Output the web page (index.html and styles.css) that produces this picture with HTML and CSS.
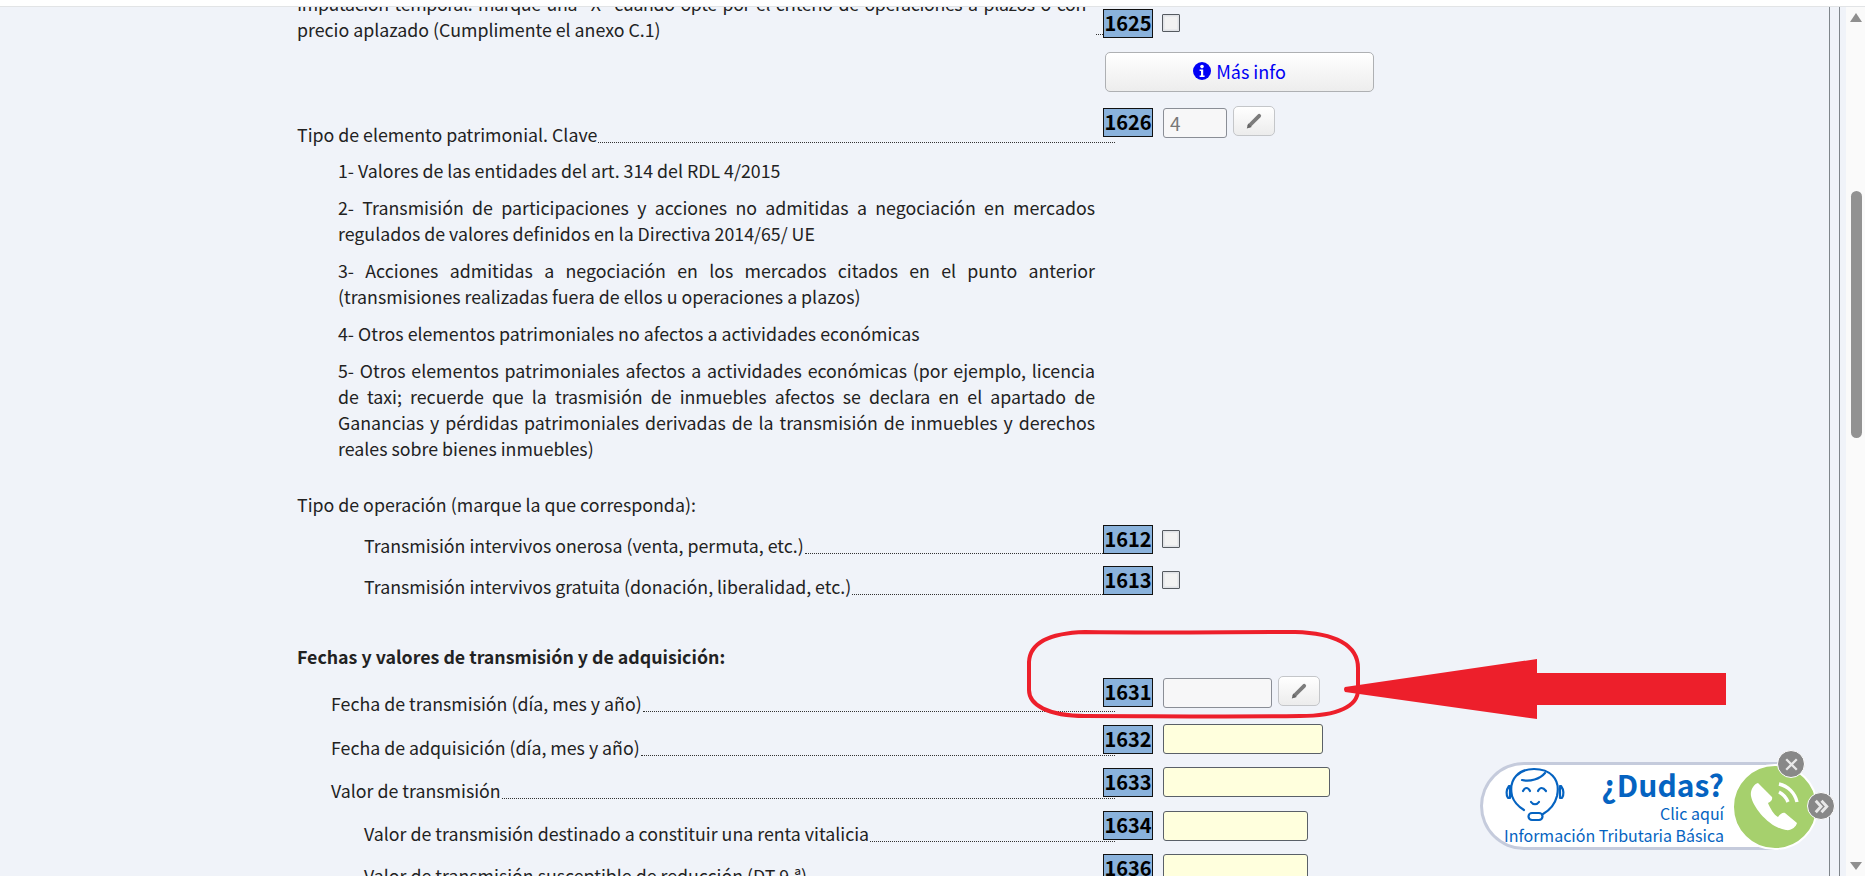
FILE: index.html
```html
<!DOCTYPE html>
<html lang="es">
<head>
<meta charset="utf-8">
<title>Ganancias patrimoniales</title>
<link rel="stylesheet" href="styles.css">
</head>
<body>
<div class="page">
  <div class="topbar"></div>
  <div class="content">
    <main class="canvas">
      <div class="form">
        <div class="row first">
          <div class="label multi">
            <span class="text justified"><span class="line-one">Imputación temporal: marque una "X" cuando opte por el criterio de operaciones a plazos o con</span><span class="line-two">precio aplazado (Cumplimente el anexo C.1)</span></span>
            <span class="lead short"></span>
          </div>
          <div class="fields boxed"><span class="code">1625</span><input class="check" type="checkbox"></div>
        </div>
        <div class="more"><button class="info" type="button"><svg class="info-icon" viewBox="0 0 18 18"><circle cx="9" cy="9" r="9" fill="#0000f5"/><circle cx="9" cy="4.6" r="1.8" fill="#fff"/><path d="M6.6 7.4h3.6v6h1.4v1.6H6.6v-1.6H8V9H6.6z" fill="#fff"/></svg>Más info</button></div>
        <div class="row r1626">
          <div class="label"><span class="text">Tipo de elemento patrimonial. Clave</span><span class="lead"></span></div>
          <div class="fields"><span class="code low">1626</span><input class="field grey w64 low" type="text" value="4" disabled><button class="pencil" type="button"><svg viewBox="0 0 16 16"><path d="M4 12 12.6 3.4" stroke="#7c7c7c" stroke-width="3.4" stroke-linecap="round" fill="none"/><path d="M1.6 14.6l1.2-4.4 3.2 3.2z" fill="#666"/></svg></button></div>
        </div>
        <p class="note one">1- Valores de las entidades del art. 314 del RDL 4/2015</p>
        <p class="note">2- Transmisión de participaciones y acciones no admitidas a negociación en mercados regulados de valores definidos en la Directiva 2014/65/ UE</p>
        <p class="note">3- Acciones admitidas a negociación en los mercados citados en el punto anterior (transmisiones realizadas fuera de ellos u operaciones a plazos)</p>
        <p class="note">4- Otros elementos patrimoniales no afectos a actividades económicas</p>
        <p class="note">5- Otros elementos patrimoniales afectos a actividades económicas (por ejemplo, licencia de taxi; recuerde que la trasmisión de inmuebles afectos se declara en el apartado de Ganancias y pérdidas patrimoniales derivadas de la transmisión de inmuebles y derechos reales sobre bienes inmuebles)</p>
        <p class="plain">Tipo de operación (marque la que corresponda):</p>
        <div class="row r1612">
          <div class="label lv2"><span class="text">Transmisión intervivos onerosa (venta, permuta, etc.)</span><span class="lead"></span></div>
          <div class="fields boxed"><span class="code">1612</span><input class="check" type="checkbox"></div>
        </div>
        <div class="row r1613">
          <div class="label lv2"><span class="text">Transmisión intervivos gratuita (donación, liberalidad, etc.)</span><span class="lead"></span></div>
          <div class="fields boxed"><span class="code">1613</span><input class="check" type="checkbox"></div>
        </div>
        <h2 class="heading">Fechas y valores de transmisión y de adquisición:</h2>
        <div class="row r1631">
          <div class="label lv1"><span class="text">Fecha de transmisión (día, mes y año)</span><span class="lead"></span></div>
          <div class="fields"><span class="code low">1631</span><input class="field grey w109 low" type="text" disabled><button class="pencil" type="button"><svg viewBox="0 0 16 16"><path d="M4 12 12.6 3.4" stroke="#7c7c7c" stroke-width="3.4" stroke-linecap="round" fill="none"/><path d="M1.6 14.6l1.2-4.4 3.2 3.2z" fill="#666"/></svg></button></div>
        </div>
        <div class="row r1632">
          <div class="label lv1"><span class="text">Fecha de adquisición (día, mes y año)</span><span class="lead"></span></div>
          <div class="fields"><span class="code tight">1632</span><input class="field yellow w160" type="text"></div>
        </div>
        <div class="row r1633">
          <div class="label lv1"><span class="text">Valor de transmisión</span><span class="lead"></span></div>
          <div class="fields"><span class="code tight">1633</span><input class="field yellow w167" type="text"></div>
        </div>
        <div class="row r1634">
          <div class="label lv2"><span class="text">Valor de transmisión destinado a constituir una renta vitalicia</span><span class="lead"></span></div>
          <div class="fields"><span class="code">1634</span><input class="field yellow w145" type="text"></div>
        </div>
        <div class="row r1636">
          <div class="label lv2"><span class="text">Valor de transmisión susceptible de reducción (DT 9.ª)</span><span class="lead"></span></div>
          <div class="fields"><span class="code">1636</span><input class="field yellow w145" type="text"></div>
        </div>
      </div>
    </main>
    <div class="rail"></div>
    <div class="scrollbar">
      <span class="arrow up"></span>
      <span class="thumb"></span>
      <span class="arrow down"></span>
    </div>
  </div>

  <svg class="annotation" viewBox="0 0 1865 876" aria-hidden="true">
    <path d="M1085 632 C1150 633 1230 632 1295 632 C1335 633 1358 645 1358 668 L1358 690 C1358 706 1338 716 1300 716 C1230 717 1150 716 1085 716 C1048 716 1029 705 1029 690 L1029 662 C1030 642 1052 633 1085 632Z" fill="none" stroke="#ed1f2b" stroke-width="4"/>
    <path d="M1345 687 L1537 659 V673 H1726 V705 H1537 V719 L1345 692 Q1343 689 1345 687Z" fill="#ed1f2b"/>
  </svg>

  <aside class="widget">
    <svg class="agent" viewBox="0 0 90 70">
      <g fill="none" stroke="#0563c1" stroke-width="2.2" stroke-linecap="round" stroke-linejoin="round">
        <path d="M22 36 C18 18 30 9 44 9 C59 9 71 18 67 36 C65 44 60 50 53 54"/>
        <path d="M22 36 C24 42 29 47 34 50"/>
        <path d="M32 20 C40 22 50 19 55 13"/>
        <path d="M19 26 C16 30 16 35 18 38 L20 38 L20 26Z"/>
        <path d="M71 26 C74 30 74 35 72 38 L70 38 L70 26Z"/>
        <path d="M33 31 C35 27 38 27 40 31"/>
        <path d="M48 31 C50 27 53 27 56 31"/>
        <path d="M41 42 C43 45 47 45 49 42"/>
        <rect x="38.5" y="53" width="14" height="7" rx="3.5"/>
      </g>
    </svg>
    <div class="help">
      <strong class="doubt">¿Dudas?</strong>
      <span class="click">Clic aquí</span>
      <span class="click">Información Tributaria Básica</span>
    </div>
    <svg class="phone" viewBox="0 0 90 90">
      <circle cx="45" cy="45" r="42" fill="#a6d06d" stroke="#fff" stroke-width="2"/>
      <path d="M28 21 C24 22 20 28 21 34 C23 46 40 66 56 68 C61 69 66 65 67 61 L55 51 C53 50 50 52 48 55 C44 53 40 46 38 41 C40 40 43 38 42 35Z" fill="#fff"/>
      <path d="M49 22 C58 24 65 31 67 40" fill="none" stroke="#fff" stroke-width="3.4"/>
      <path d="M49 30 C53 32 56 35 58 40" fill="none" stroke="#fff" stroke-width="3.4"/>
    </svg>
    <button class="round close" type="button" aria-label="Cerrar"><svg viewBox="0 0 26 26"><path d="M7.5 7.5l11 11M18.5 7.5l-11 11" stroke="#e8e8e8" stroke-width="2.4"/></svg></button>
    <button class="round expand" type="button" aria-label="Ocultar"><svg viewBox="0 0 26 26"><path d="M7 7l5.5 6L7 19M13 7l5.5 6-5.5 6" fill="none" stroke="#e8e8e8" stroke-width="3"/></svg></button>
  </aside>
</div>
</body>
</html>
```
FILE: styles.css
```css
* { box-sizing: border-box; }
html, body { margin: 0; padding: 0; height: 100%; overflow: hidden; }
body {
  background: #f0f3f9;
  color: #222;
  font-family: "Noto Sans CJK SC", "Noto Sans", "Liberation Sans", sans-serif;
  font-size: 17.78px;
}
.page { position: relative; width: 1865px; height: 876px; display: flex; flex-direction: column; overflow: hidden; }
.topbar { flex: none; height: 7px; background: #fff; border-bottom: 1px solid #e2e4e6; }
.content { flex: 1; display: flex; min-height: 0; }
.canvas { width: 1829px; flex: none; overflow: hidden; }
.rail { flex: none; width: 11px; border-left: 1.5px solid #7f858b; border-right: 1.5px solid #7f858b; margin-right: 6px; }
.scrollbar { flex: none; width: 19px; background: #fafafa; display: flex; flex-direction: column; align-items: center; padding-left: 1px; padding-top: 6px; }
.thumb { width: 11px; height: 247px; border-radius: 6px; background: #929292; margin-top: 169px; }
.arrow { width: 0; height: 0; border-left: 6.5px solid transparent; border-right: 6.5px solid transparent; }
.arrow.up { border-bottom: 9px solid #8f8f8f; }
.arrow.down { border-top: 8px solid #8f8f8f; margin-top: auto; margin-bottom: 6px; }

.form { margin-left: 297px; width: 1100px; }
.row { display: grid; grid-template-columns: 806px 1fr; }
.label { display: flex; align-items: flex-end; align-self: end; line-height: 14px; white-space: nowrap; }
.label.lv1 { padding-left: 34px; }
.label.lv2 { padding-left: 67px; }
.label.multi { white-space: normal; line-height: 26px; align-self: start; }
.text { flex: none; margin-bottom: 2px; }
.text.justified { width: 789px; flex: none; }
.line-one { display: block; letter-spacing: -0.35px; white-space: nowrap; text-align: justify; text-align-last: justify; }
.line-two { display: block; }
.lead { flex: 1; border-bottom: 1px dotted #333; margin: 0 -12px 0 1px; height: 1px; }
.lead.short { margin: 0 0 9px 10px; }
.fields { display: flex; align-items: flex-start; }

.row.first { margin-top: -17px; height: 54px; }
.fields.boxed { align-self: start; }
.row.first .fields { padding-top: 19px; }
.more { padding-left: 808px; margin-top: 8px; }
.r1626 { margin-top: 14px; height: 37px; }
.r1612 { margin-top: 8px; height: 29px; }
.r1613 { margin-top: 12px; height: 29px; }
.r1631 { margin-top: 7px; height: 36px; }
.r1632 { margin-top: 12px; height: 32px; }
.r1633 { margin-top: 11px; height: 32px; }
.r1634 { margin-top: 12px; height: 31px; }
.r1636 { margin-top: 12px; height: 30px; }

.code {
  flex: none; width: 50px; height: 29px; line-height: 25px; text-align: center;
  background: #8ab2dc; border: 1.5px solid #111; color: #000; font-weight: 700; font-size: 20px;
}
.code.low { margin-top: 2px; }
.code.tight { margin-top: 1px; }
.check {
  appearance: none; margin: 5px 0 0 9px; width: 18px; height: 18px; flex: none;
  background: #f2f2f2; border: 1.5px solid #555a60; box-shadow: inset 0 0 0 1.5px #e0e2e6; border-radius: 1px;
}
.field {
  display: block; margin: 0 0 0 10px; height: 30px; border-radius: 3px; padding: 0 6px 2px;
  font-family: inherit; font-size: 19px; flex: none; outline: 0;
}
.field.low { margin-top: 2px; }
.field.grey { background: #f7f7f8; border: 1.5px solid #8a8e96; color: #777; }
.field.yellow { background: #ffffdd; border: 1.5px solid #5a6068; }
.w64 { width: 64px; }
.w109 { width: 109px; }
.w160 { width: 160px; }
.w167 { width: 167px; }
.w145 { width: 145px; }
.pencil {
  flex: none; width: 42px; height: 30px; margin-left: 6px; padding: 0; display: flex; align-items: center; justify-content: center;
  background: linear-gradient(#fff, #ececec); border: 1.5px solid #c4c6c9; border-radius: 5px;
}
.pencil svg { width: 18px; height: 18px; }
.info {
  width: 269px; height: 40px; display: flex; align-items: center; justify-content: center; gap: 5px; padding: 0 0 2px;
  background: linear-gradient(#fff, #ededed); border: 1.5px solid #aeb0b3; border-radius: 5px;
  color: #0000f5; font-family: inherit; font-size: 18px;
}
.info-icon { width: 18px; height: 18px; }

.note { margin: 11px 0 0 41px; width: 757px; line-height: 26px; text-align: justify; }
.note.one { margin-top: 14px; }
.plain { margin: 30px 0 0; line-height: 26px; }
.heading { margin: 48px 0 0; font-size: 17.78px; font-weight: 700; line-height: 26px; }

.annotation { position: absolute; left: 0; top: 0; width: 1865px; height: 876px; pointer-events: none; }

.widget {
  position: absolute; left: 1480px; top: 762px; width: 300px; height: 88px;
  display: flex; background: #fff; border: 3px solid #c5cbdc; border-right: 0; border-radius: 44px 0 0 44px;
}
.agent { flex: none; width: 90px; height: 70px; margin: -5px 0 0 7px; }
.help { flex: none; width: 144px; display: flex; flex-direction: column; align-items: flex-end; color: #0563c1; }
.doubt { font-size: 30px; line-height: 38px; height: 38px; }
.click { font-size: 16px; line-height: 21.5px; white-space: nowrap; }
.phone { position: absolute; left: 247px; top: -3px; width: 90px; height: 90px; }
.round {
  position: absolute; width: 28px; height: 28px; padding: 0; border-radius: 50%;
  background: #888; border: 1.5px solid #fff; display: flex; align-items: center; justify-content: center;
}
.round svg { width: 25px; height: 25px; }
.close { left: 294px; top: -15px; }
.expand { left: 324px; top: 27px; }
```
